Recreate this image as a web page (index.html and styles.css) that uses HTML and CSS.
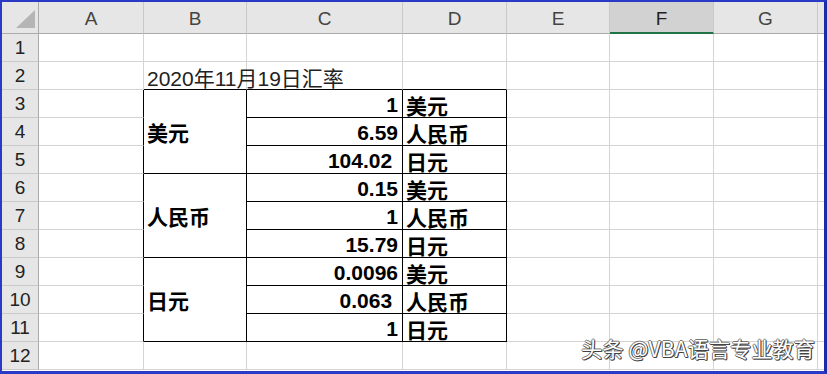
FILE: index.html
```html
<!DOCTYPE html>
<html lang="zh">
<head>
<meta charset="utf-8">
<link rel="stylesheet" href="styles.css">
</head>
<body>
<div class="frame">
  <div class="sheet">
    <div class="hd corner"><svg width="19" height="18" viewBox="0 0 19 18"><polygon points="19,0 19,18 0,18" fill="#b5b5b5"/></svg></div>
    <div class="hd col">A</div>
    <div class="hd col">B</div>
    <div class="hd col">C</div>
    <div class="hd col">D</div>
    <div class="hd col">E</div>
    <div class="hd col sel">F</div>
    <div class="hd col">G</div>
    <div class="hd col"></div>

    <div class="hd rn">1</div>
    <div class="c"></div><div class="c"></div><div class="c"></div><div class="c"></div><div class="c"></div><div class="c"></div><div class="c"></div><div class="c"></div>

    <div class="hd rn">2</div>
    <div class="c"></div>
    <div class="c bb title">2020年11月19日汇率</div>
    <div class="c bb"></div>
    <div class="c bb"></div>
    <div class="c"></div><div class="c"></div><div class="c"></div><div class="c"></div>

    <div class="hd rn">3</div>
    <div class="c br"></div>
    <div class="c tb merged">美元</div>
    <div class="c tb num">1</div>
    <div class="c tb unit">美元</div>
    <div class="c"></div><div class="c"></div><div class="c"></div><div class="c"></div>

    <div class="hd rn">4</div>
    <div class="c br"></div>
    <div class="c tb num">6.59</div>
    <div class="c tb unit">人民币</div>
    <div class="c"></div><div class="c"></div><div class="c"></div><div class="c"></div>

    <div class="hd rn">5</div>
    <div class="c br"></div>
    <div class="c tb num">104.02 </div>
    <div class="c tb unit">日元</div>
    <div class="c"></div><div class="c"></div><div class="c"></div><div class="c"></div>

    <div class="hd rn">6</div>
    <div class="c br"></div>
    <div class="c tb merged">人民币</div>
    <div class="c tb num">0.15</div>
    <div class="c tb unit">美元</div>
    <div class="c"></div><div class="c"></div><div class="c"></div><div class="c"></div>

    <div class="hd rn">7</div>
    <div class="c br"></div>
    <div class="c tb num">1</div>
    <div class="c tb unit">人民币</div>
    <div class="c"></div><div class="c"></div><div class="c"></div><div class="c"></div>

    <div class="hd rn">8</div>
    <div class="c br"></div>
    <div class="c tb num">15.79</div>
    <div class="c tb unit">日元</div>
    <div class="c"></div><div class="c"></div><div class="c"></div><div class="c"></div>

    <div class="hd rn">9</div>
    <div class="c br"></div>
    <div class="c tb merged">日元</div>
    <div class="c tb num">0.0096</div>
    <div class="c tb unit">美元</div>
    <div class="c"></div><div class="c"></div><div class="c"></div><div class="c"></div>

    <div class="hd rn">10</div>
    <div class="c br"></div>
    <div class="c tb num">0.063 </div>
    <div class="c tb unit">人民币</div>
    <div class="c"></div><div class="c"></div><div class="c"></div><div class="c"></div>

    <div class="hd rn">11</div>
    <div class="c br"></div>
    <div class="c tb num">1</div>
    <div class="c tb unit">日元</div>
    <div class="c"></div><div class="c"></div><div class="c"></div><div class="c"></div>

    <div class="hd rn">12</div>
    <div class="c"></div><div class="c"></div><div class="c"></div><div class="c"></div><div class="c"></div><div class="c"></div><div class="c"></div><div class="c"></div>
  </div>
  <div class="watermark">头条 @VBA语言专业教育</div>
</div>
</body>
</html>
```

FILE: styles.css
```css
* { box-sizing: border-box; }
html, body { margin: 0; padding: 0; background: #fff; }
.frame {
  position: relative;
  width: 827px;
  height: 374px;
  border: 2px solid #2a3ac6;
  border-bottom-width: 3px;
  border-right: 3px solid #1c2aa8;
  background: #fff;
  overflow: hidden;
  font-family: "Liberation Sans", "Noto Sans CJK SC", sans-serif;
}
.sheet {
  display: grid;
  grid-template-columns: 37px 105px 103px 156px 104px 103px 104px 104px 7px;
  grid-template-rows: 32px repeat(12, 28px);
}
.hd {
  background: #e6e6e6;
  color: #444;
  display: flex;
  align-items: center;
  justify-content: center;
}
.corner {
  border-right: 1px solid #ababab;
  border-bottom: 1px solid #ababab;
  align-items: flex-end;
  justify-content: flex-end;
  padding: 0 3px 5px 0;
}
.col {
  font-size: 19px;
  border-right: 1px solid #c9c9c9;
  border-bottom: 1px solid #ababab;
  padding-top: 3px;
}
.col.sel {
  background: #d2d2d2;
  color: #222;
  border-bottom: 2px solid #217346;
}
.rn {
  font-size: 19px;
  color: #222;
  border-right: 1px solid #ababab;
  border-bottom: 1px solid #c9c9c9;
  padding-top: 1px;
}
.c {
  border-right: 1px solid #d4d4d4;
  border-bottom: 1px solid #d4d4d4;
  display: flex;
  align-items: center;
  font-size: 21px;
  color: #000;
  white-space: pre;
  overflow: visible;
}
.bb { border-bottom-color: #000; }
.br { border-right-color: #000; }
.tb {
  border-right-color: #000;
  border-bottom-color: #000;
  font-weight: bold;
}
.title {
  font-weight: normal;
  color: #222;
  padding: 3px 0 0 3px;
}
.merged {
  grid-row: span 3;
  padding-left: 3px;
}
.num {
  justify-content: flex-end;
  padding: 2px 4px 0 0;
}
.unit {
  padding: 2px 0 0 3px;
}
.watermark {
  position: absolute;
  right: 9px;
  bottom: 8px;
  font-family: "Noto Sans CJK SC", sans-serif;
  font-size: 21px;
  color: #fff;
  letter-spacing: 0.2px;
  text-shadow: 1px 1px 0 #444, -1px 0 0 #777, 0 -1px 0 #777, 1px 0 0 #444, 0 1px 0 #444;
}
```
